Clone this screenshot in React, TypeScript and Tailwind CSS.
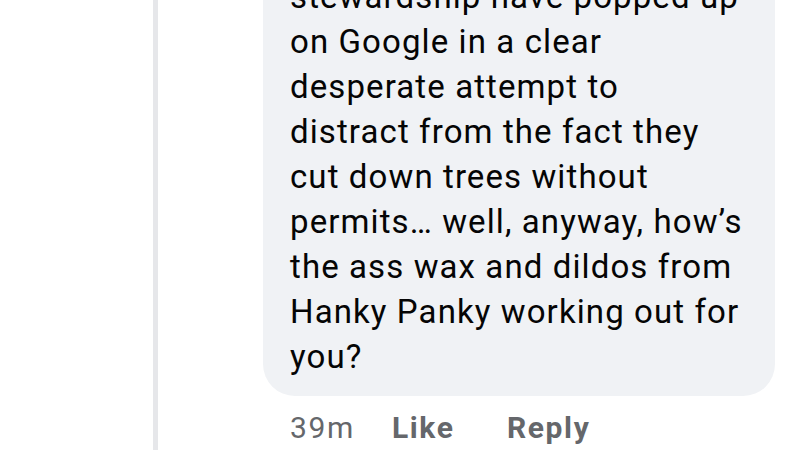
import React from 'react';

const lines = [
  'stewardship have popped up',
  'on Google in a clear',
  'desperate attempt to',
  'distract from the fact they',
  'cut down trees without',
  'permits… well, anyway, how’s',
  'the ass wax and dildos from',
  'Hanky Panky working out for',
  'you?',
];

const App: React.FC = () => {
  return (
    <div
      className="w-[800px] h-[450px] overflow-hidden bg-white flex"
      style={{ fontFamily: 'Roboto, "Liberation Sans", sans-serif' }}
    >
      <div className="w-[153px] shrink-0" />
      <div className="w-[5px] shrink-0 bg-[#e6e7ea]" />
      <div className="ml-[105px] w-[512px] shrink-0 -mt-[60px]">
        <div className="bg-[#f0f2f5] rounded-[32px] pl-[27px] pr-[16px] pt-[34px] pb-[17px]">
          <p className="text-[33px] leading-[45px] tracking-[1.1px] text-[#050505]">
            {lines.map((l, i) => (
              <span key={i} className="block whitespace-nowrap">
                {l}
              </span>
            ))}
          </p>
        </div>
        <div className="flex items-center mt-[14px] pl-[27px] text-[30px] leading-[36px] tracking-[1.6px] text-[#65676b]">
          <span className="w-[102px]">39m</span>
          <span className="w-[115px] font-bold">Like</span>
          <span className="font-bold">Reply</span>
        </div>
      </div>
    </div>
  );
};

export default App;
